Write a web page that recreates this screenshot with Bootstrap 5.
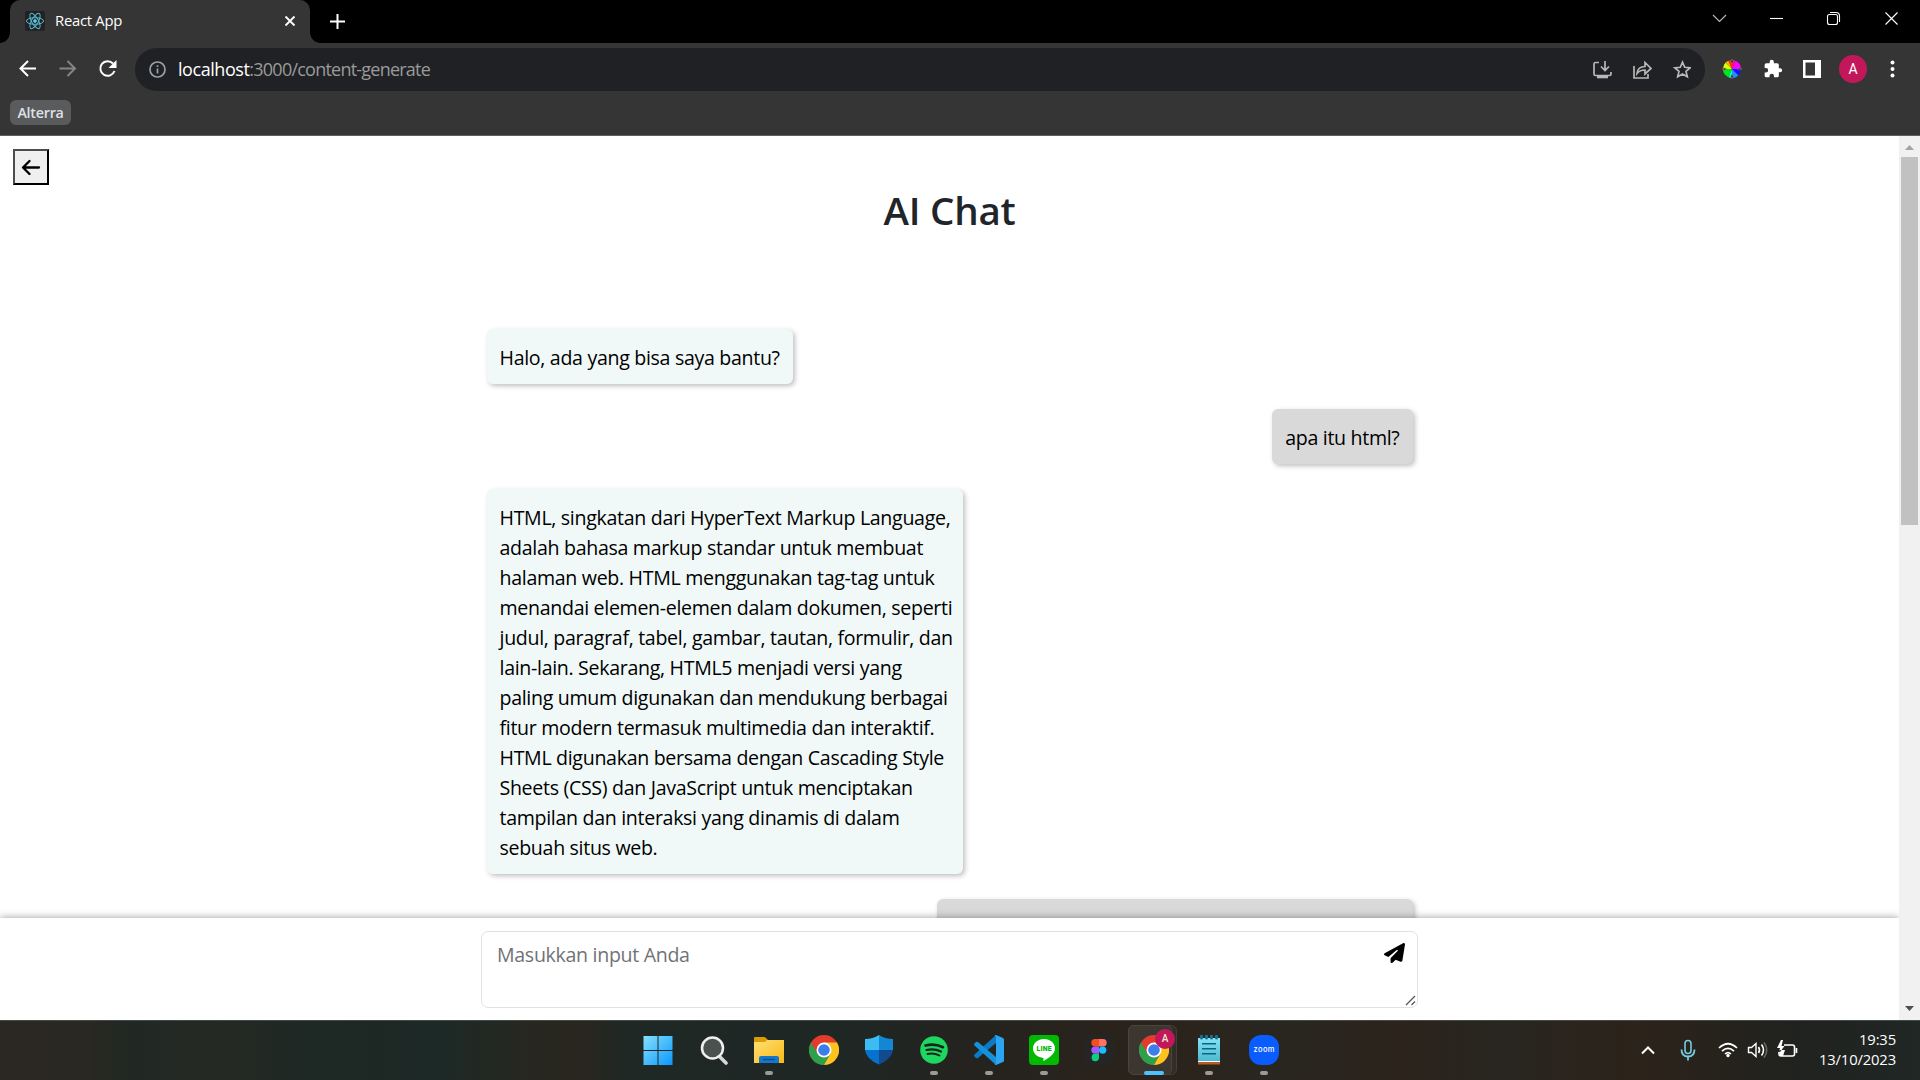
<!DOCTYPE html>
<html lang="id">
<head>
<meta charset="utf-8">
<title>React App</title>
<link href="https://cdn.jsdelivr.net/npm/bootstrap@5.3.0/dist/css/bootstrap.min.css" rel="stylesheet">
<style>
html,body{height:1080px;overflow:hidden}
body{font-family:"Open Sans","Noto Sans",sans-serif;width:1920px;background:#fff}
svg{display:block;flex:none}
.tabstrip{height:43px;background:#000;padding-left:10px}
.apptab{width:300px;height:43px;background:#353535;border-radius:10px 10px 0 0;padding:0 14px 1px 15px;color:#fff;position:relative}
.apptab::before,.apptab::after{content:"";position:absolute;bottom:0;width:10px;height:10px}
.apptab::before{left:-10px;background:radial-gradient(circle at 0 0,#000 9.5px,#353535 10px)}
.apptab::after{right:-10px;background:radial-gradient(circle at 100% 0,#000 9.5px,#353535 10px)}
.tabtitle{font-size:14.8px;letter-spacing:-.25px;margin:-2px 0 0 10px}
.favicon{background:#222;border-radius:2px}
.toolbar{height:53px;background:#353535;padding:0 16px 0 16px}
.omnibox{width:1570px;height:43px;border-radius:22px;background:#202124;margin-left:15px;padding:0 14px 0 14px}
.addr{font-size:18px;letter-spacing:-.77px;color:#9a9a9a;margin:-1px 0 0 12px;line-height:24px}
.addr b{font-weight:400;color:#fff;letter-spacing:-.45px}
.bookmarks{height:40px;background:#353535;border-bottom:1px solid #5f5f5f;padding:4px 10px}
.chip{background:#5a5b5d;border-radius:6px;width:61px;height:25px;font-size:14.3px;font-weight:600;letter-spacing:-.25px;color:#dfe1e5}
.avatar{width:28px;height:28px;background:#c2185b;color:#fff;font-size:14px;font-family:Roboto,sans-serif}
.page{height:884px}
.view{width:1899px;overflow:hidden}
.feed{height:782px;overflow:hidden}
.back{width:36px;height:36px;margin:13px 0 0 13px;border:2px solid;border-color:#4d4d4d #000 #000 #4d4d4d;background:#efefef;padding:0}
.head{font-size:38.5px;font-weight:600;line-height:48px;letter-spacing:-.2px;margin:1px 0 0;color:#212529}
.chat{width:926px;margin:95px auto 0;gap:25px}
.bubble{border-radius:6px;padding:14px 13px 11px;font-size:19.6px;letter-spacing:-.32px;line-height:30px;color:#000;box-shadow:2px 2px 5px rgba(0,0,0,.25);white-space:nowrap}
.bot{background:#f0f9f8}
.me{background:#d9d9d9}
.wide{width:476px}
.composer{height:102px;background:#fff;box-shadow:0 0 8px rgba(0,0,0,.4);position:relative;padding-top:13px}
.field{width:937px;height:77px;border:1px solid #dee2e6;border-radius:7px;padding:8px 12px 0 15px;position:relative}
.ph{font-size:19.6px;letter-spacing:-.32px;line-height:30px;color:#707376}
.grip{position:absolute;right:1px;bottom:1px}
.sb{width:21px;background:#f1f1f1;padding:0 2px}
.thumb{width:17px;height:368px;background:#c1c1c1}
.taskbar{height:60px;border-top:1px solid #454a48;background:linear-gradient(90deg,#2b2722 0,#292822 90px,#212824 130px,#252923 220px,#1e2825 310px,#1d2926 440px,#28271f 545px,#28261f 585px,#1e2825 630px,#1f2725 850px,#24231f 960px,#2b231b 1150px,#292620 1280px,#2b231c 1400px,#282620 1500px,#2c231a 1640px,#20221f 1800px,#202725 1920px);color:#fff}
.apps{margin-left:631px}
.app{width:55px;height:59px;position:relative;padding-top:14px}
.app::after{content:"";position:absolute;left:50%;bottom:5px;width:0;height:4px;border-radius:2px;background:#9a9a98;transform:translateX(-50%)}
.run::after{width:8px}
.act::after{width:20px;background:#4cc2ff}
.actbg{position:absolute;left:2px;top:4px;width:49px;height:50px}
.pin{position:absolute;left:28px;top:8px;width:20px;height:20px;background:#c2185b;color:#eec;font:500 10px/20px Roboto,sans-serif;text-align:center}
.clock{font-size:14.8px;line-height:20px;letter-spacing:-.15px;padding-bottom:4px}
</style>
<script src="https://cdn.jsdelivr.net/npm/bootstrap@5.3.0/dist/js/bootstrap.bundle.min.js"></script>
</head>
<body class="d-flex flex-column">
<header>
 <div class="tabstrip d-flex">
  <div class="apptab d-flex align-items-center">
   <svg class="favicon" width="20" height="20" viewBox="0 0 20 20" fill="none" stroke="#53b9d3" stroke-width="1"><ellipse cx="10" cy="10" rx="8.6" ry="3.3"/><ellipse cx="10" cy="10" rx="8.6" ry="3.3" transform="rotate(60 10 10)"/><ellipse cx="10" cy="10" rx="8.6" ry="3.3" transform="rotate(120 10 10)"/><circle cx="10" cy="10" r="1.4" fill="#61dafb"/></svg>
   <span class="tabtitle">React App</span>
   <svg class="ms-auto" width="12" height="12" viewBox="0 0 12 12" stroke="#fff" stroke-width="1.8"><path d="M1.5 1.5l9 9M10.500 1.500l-9 9"/></svg>
  </div>
  <svg style="margin:13px 0 0 19px" width="17" height="17" viewBox="0 0 17 17" stroke="#fff" stroke-width="2"><path d="M8.500 1v15M1 8.500h15"/></svg>
  <svg class="ms-auto" width="230" height="38" viewBox="0 0 230 38" fill="none" stroke="#fff" stroke-width="1.1"><path d="M23 15l6.500 6.500L36 15" stroke="#bbb"/><path d="M80 18.500h13"/><rect x="137.500" y="14.500" width="10" height="10" rx="2"/><path d="M140 12.500h6a3.500 3.500 0 0 1 3.500 3.500v6"/><path d="M195.500 12.500l12 12M207.500 12.500l-12 12"/></svg>
 </div>
 <div class="toolbar d-flex align-items-center">
  <svg style="margin-top:-2px" width="104" height="24" viewBox="0 0 104 24" fill="none" stroke="#fff" stroke-width="2"><path d="M20 11.500H5M12 4l-7.500 7.500L12 19"/><path d="M43.500 11.500h15M51.500 4l7.500 7.500-7.500 7.500" stroke="#858585"/><path d="M98.500 14a7.300 7.300 0 1 1-1.500-7.500"/><path d="M100.500 3v8h-8z" fill="#fff" stroke="none"/></svg>
  <div class="omnibox d-flex align-items-center">
   <svg width="17" height="17" viewBox="0 0 17 17" fill="none" stroke="#9aa0a6" stroke-width="1.700"><circle cx="8.500" cy="8.500" r="7.500"/><path d="M8.500 7.500v5M8.500 4.300v1.800"/></svg>
   <span class="addr"><b>localhost</b>:3000/content-generate</span>
   <svg class="ms-auto" width="100" height="24" viewBox="0 0 100 24" fill="none" stroke="#b8b8b8" stroke-width="1.700"><path d="M8 4.500H4.500a1.500 1.500 0 0 0-1.500 1.500v10a1.500 1.500 0 0 0 1.500 1.500h14a1.500 1.500 0 0 0 1.500-1.500v-2M14 3v9M10 8.500l4 4 4-4"/><path d="M6 18h11v2.300H6z" fill="#b8b8b8" stroke="none"/><path d="M43 8v12h14v-4M46 15.500c.5-5 3.500-7 8-7V4.500l6 6-6 5.500v-4c-3.500 0-6 1-8 3.500z"/><path d="M91.500 4.200l2.200 5.100 5.500.5-4.200 3.600 1.300 5.400-4.800-2.900-4.800 2.900 1.300-5.400-4.200-3.600 5.500-.5z"/></svg>
  </div>
  <svg style="margin:-2px 0 0 17px" width="20" height="20" viewBox="0 0 20 20"><path d="M10 10V1a9 9 0 0 1 3.500.7z" fill="#ff1060"/><path d="M10 10l3.500-8.300A9 9 0 0 1 19 10z" fill="#f0f"/><path d="M10 10h9a9 9 0 0 1-2.600 6.400z" fill="#1010ff"/><path d="M10 10l6.400 6.400A9 9 0 0 1 10 19z" fill="#1e90ff"/><path d="M10 10v9a9 9 0 0 1-3.600-.8z" fill="#0fd"/><path d="M10 10l-3.600 8.200A9 9 0 0 1 1 10z" fill="#00e516"/><path d="M10 10H1a9 9 0 0 1 2.600-6.400z" fill="#df0"/><path d="M10 10L3.600 3.600A9 9 0 0 1 6.500 1.700z" fill="#ffb000"/><path d="M10 10L6.500 1.700A9 9 0 0 1 10 1z" fill="#ff3000"/><path d="M10 0l1.300 2.500L10 5 8.700 2.500zM10 15l1.300 2.500L10 20l-1.300-2.500zM0 10l2.500-1.100L5 10l-2.500 1.100zM15 10l2.500-1.100L20 10l-2.500 1.100z" fill="#333" stroke="#999" stroke-width=".4"/></svg>
  <svg style="margin:-2px 0 0 21px" width="20" height="20" viewBox="0 0 24 24" fill="#fff"><path d="M20.500 11H19V7a2 2 0 0 0-2-2h-4V3.500a2.500 2.500 0 0 0-5 0V5H4a2 2 0 0 0-2 2v3.800h1.500a2.700 2.700 0 0 1 0 5.400H2V20a2 2 0 0 0 2 2h3.800v-1.500a2.700 2.700 0 0 1 5.400 0V22H17a2 2 0 0 0 2-2v-4h1.500a2.500 2.500 0 0 0 0-5z"/></svg>
  <svg style="margin:-1px 0 0 20px" width="18" height="18" viewBox="0 0 18 18"><path d="M0 0h18v18H0z" fill="#fff"/><path d="M2.500 2.500h9.500v13H2.500z" fill="#353535"/></svg>
  <div class="avatar rounded-circle d-flex align-items-center justify-content-center" style="margin:-1px 0 0 18px">A</div>
  <svg class="ms-auto" style="margin-top:-1px" width="24" height="20" viewBox="0 0 24 20" fill="#fff"><circle cx="12.500" cy="3.500" r="2"/><circle cx="12.500" cy="10" r="2"/><circle cx="12.500" cy="16.500" r="2"/></svg>
 </div>
 <div class="bookmarks"><div class="chip d-flex align-items-center justify-content-center">Alterra</div></div>
</header>
<div class="page d-flex">
 <main class="view d-flex flex-column">
  <div class="feed">
   <button class="back d-flex align-items-center justify-content-center" aria-label="Kembali"><svg width="20" height="16" viewBox="0 0 20 16" fill="none" stroke="#000" stroke-width="2.300" stroke-linecap="round" stroke-linejoin="round"><path d="M18 8.500H2.500M8.500 2L2 8.500 8.500 15"/></svg></button>
   <h1 class="head text-center">AI Chat</h1>
   <div class="chat d-flex flex-column">
    <div class="bubble bot align-self-start">Halo, ada yang bisa saya bantu?</div>
    <div class="bubble me align-self-end">apa itu html?</div>
    <div class="bubble bot wide align-self-start">HTML, singkatan dari HyperText Markup Language,<br>adalah bahasa markup standar untuk membuat<br>halaman web. HTML menggunakan tag-tag untuk<br>menandai elemen-elemen dalam dokumen, seperti<br>judul, paragraf, tabel, gambar, tautan, formulir, dan<br>lain-lain. Sekarang, HTML5 menjadi versi yang<br>paling umum digunakan dan mendukung berbagai<br>fitur modern termasuk multimedia dan interaktif.<br>HTML digunakan bersama dengan Cascading Style<br>Sheets (CSS) dan JavaScript untuk menciptakan<br>tampilan dan interaksi yang dinamis di dalam<br>sebuah situs web.</div>
    <div class="bubble me wide align-self-end">&nbsp;</div>
   </div>
  </div>
  <div class="composer">
   <div class="field d-flex justify-content-between align-items-start mx-auto">
    <span class="ph">Masukkan input Anda</span>
    <svg style="margin-top:3px" width="21" height="20" viewBox="0 0 512 512" preserveAspectRatio="none"><path d="M498.100 5.600c10.100 7 15.400 19.100 13.500 31.200l-64 416c-1.500 9.700-7.400 18.200-16 23s-18.900 5.400-28 1.600L284 427.700l-68.500 74.100c-8.900 9.700-22.900 12.900-35.200 8.100S160 493.200 160 480v-83.600c0-4 1.500-7.800 4.200-10.700l167.600-182.900c5.800-6.300 5.600-16-.4-22s-15.700-6.400-22-.7L106 360.800 17.700 316.600C7.100 311.300.3 300.700 0 288.900s5.900-22.800 16.100-28.700l448-256c10.700-6.100 23.900-5.500 34 1.400z"/></svg>
    <svg class="grip" width="11" height="11" viewBox="0 0 11 11" stroke="#555" stroke-width="1.300"><path d="M1 10l9-9M6.500 10L10 6.500"/></svg>
   </div>
  </div>
 </main>
 <aside class="sb d-flex flex-column align-items-center">
  <svg width="17" height="21" viewBox="0 0 17 21"><path d="M4 14l4.500-5 4.500 5z" fill="#a3a3a3"/></svg>
  <div class="thumb"></div>
  <svg class="mt-auto" width="17" height="21" viewBox="0 0 17 21"><path d="M4 7l4.500 5L13 7z" fill="#505050"/></svg>
 </aside>
</div>
<footer class="taskbar d-flex">
 <div class="apps d-flex">
  <div class="app d-flex justify-content-center"><svg style="margin-left:-2px" width="30" height="30" viewBox="0 0 30 30"><defs><linearGradient id="w" x1="0" y1="0" x2="1" y2="1"><stop offset="0" stop-color="#86e0ff"/><stop offset="1" stop-color="#0a98fb"/></linearGradient></defs><path d="M.5 1h14v14H.5zM15.500 1h14v14h-14zM.5 16h14v14H.5zM15.500 16h14v14h-14z" fill="url(#w)"/></svg></div>
  <div class="app d-flex justify-content-center"><svg width="30" height="30" viewBox="0 0 30 30"><path d="M20 21l7 7" stroke="#d4d7db" stroke-width="3.600" stroke-linecap="round"/><circle cx="13.500" cy="13" r="10.500" fill="#4b514f" stroke="#eeeff1" stroke-width="2.500"/></svg></div>
  <div class="app run d-flex justify-content-center"><svg width="30" height="30" viewBox="0 0 30 30"><defs><linearGradient id="f" x1="0" y1="0" x2="1" y2="1"><stop offset="0" stop-color="#ffe075"/><stop offset="1" stop-color="#f9b814"/></linearGradient></defs><path d="M0 3q0-1 1-1h9q1 0 2 1l2 2v7H0z" fill="#dd9b05"/><path d="M0 7h11l2-2h17v23H0z" fill="url(#f)"/><path d="M5 28v-5q0-2 2-2h16q2 0 2 2v5z" fill="#1478c9"/><path d="M9 24.500h12" stroke="#0a4a8c" stroke-width="1.300"/></svg></div>
  <div class="app d-flex justify-content-center"><svg width="30" height="30" viewBox="0 0 48 48"><g id="chrome"><circle cx="24" cy="24" r="24" fill="#e33b2e"/><path d="M3.200 12A24 24 0 0 0 24 48l10.400-18L24 24l-10.400 6z" fill="#2da04c"/><path d="M24 12h20.800A24 24 0 0 1 24 48l10.400-18z" fill="#fcc41c"/><circle cx="24" cy="24" r="12" fill="#fff"/><circle cx="24" cy="24" r="9.300" fill="#3b7ded"/></g></svg></div>
  <div class="app d-flex justify-content-center"><svg width="30" height="30" viewBox="0 0 30 30"><path d="M15 0v15H1V4q8 0 14-4z" fill="#3bbcf2"/><path d="M15 0q6 4 14 4v11H15z" fill="#1487d4"/><path d="M1 15h14v14.500Q2 24 1 15z" fill="#0672cd"/><path d="M15 15h14q-1 9-14 14.500z" fill="#114a8e"/></svg></div>
  <div class="app run d-flex justify-content-center"><svg width="30" height="30" viewBox="0 0 30 30" fill="none" stroke="#17251c" stroke-linecap="round"><circle cx="15" cy="15" r="13.800" fill="#1ed760" stroke="none"/><path d="M6.500 10.500q9-2.500 17.500 1.700" stroke-width="2.700"/><path d="M7.500 15q7.500-2 14.500 1.600" stroke-width="2.200"/><path d="M8.500 19q6-1.500 12 1.500" stroke-width="1.900"/></svg></div>
  <div class="app run d-flex justify-content-center"><svg width="30" height="30" viewBox="0 0 30 30"><path d="M22 0v8L4 23q-1 .7-2 0l-1.500-1.500q-1-1 0-2z" fill="#0a7ac4"/><path d="M22 30v-8L4 7q-1-.7-2 0L.5 8.500q-1 1 0 2z" fill="#1690db"/><path d="M22 0l7 3q1 .5 1 1.500v21q0 1-1 1.500l-7 3q-1 0-1.500-1 1.500.5 1.500-1V2q0-1.500-1.500-1 .5-1 1.500-1z" fill="#2aa5f1"/></svg></div>
  <div class="app run d-flex justify-content-center"><svg width="30" height="30" viewBox="0 0 30 30"><rect width="30" height="30" rx="4" fill="#00b900"/><path d="M15 4C8.500 4 4 8.300 4 13.500c0 4.800 4 8.500 9.500 9.300 1.500.3 1 1.200.8 3.200 4-2 11.700-6.500 11.700-12.500C26 8.300 21.500 4 15 4z" fill="#fff"/><text x="15" y="16.300" font-family="Roboto" font-size="6.800" font-weight="900" text-anchor="middle" textLength="15" fill="#00b900">LINE</text></svg></div>
  <div class="app d-flex justify-content-center"><svg width="30" height="30" viewBox="0 0 30 30"><rect width="30" height="30" rx="2" fill="#252525"/><path d="M15 4h-4a3.700 3.700 0 0 0 0 7.400h4z" fill="#f24e1e"/><path d="M15 4h4a3.700 3.700 0 0 1 0 7.400h-4z" fill="#ff7262"/><path d="M15 11.400h-4a3.700 3.700 0 0 0 0 7.400h4z" fill="#a259ff"/><circle cx="18.700" cy="15.100" r="3.700" fill="#1abcfe"/><path d="M15 18.800h-4a3.700 3.700 0 1 0 4 3.700z" fill="#0acf83"/></svg></div>
  <div class="app act d-flex justify-content-center"><svg class="actbg" viewBox="0 0 49 50"><rect x=".5" y=".5" width="48" height="49" rx="5" fill="#332d27" stroke="#443e38"/><rect x=".5" y=".5" width="43" height="49" rx="5" fill="#3b3630" stroke="#49443e"/></svg><svg class="position-relative" width="30" height="30" viewBox="0 0 48 48"><use href="#chrome"/></svg><span class="pin rounded-circle" style="margin-left:1px">A</span></div>
  <div class="app run d-flex justify-content-center"><svg width="30" height="30" viewBox="0 0 30 30"><defs><linearGradient id="n" x1="0" y1="0" x2="0" y2="1"><stop offset="0" stop-color="#84e3f5"/><stop offset="1" stop-color="#4db8d2"/></linearGradient></defs><path d="M4 25h22v4.500H4z" fill="#b65d22"/><path d="M4 25h22v2H4z" fill="#fff"/><path d="M4 3h22v23H4z" fill="url(#n)"/><path d="M8 8.700h14M8 13.700h14M8 18.700h14" stroke="#0b6481" stroke-width="1.600"/><path d="M7.500 1v2M12.500 1v2M17.500 1v2M22.500 1v2" stroke="#14708d" stroke-width="3" stroke-linecap="round"/></svg></div>
  <div class="app run d-flex justify-content-center"><svg width="30" height="30" viewBox="0 0 30 30"><rect width="30" height="30" rx="12" fill="#0b5cff"/><text x="15" y="17.300" font-family="Inter" font-size="7.500" font-weight="500" text-anchor="middle" textLength="21" fill="#fff">zoom</text></svg></div>
 </div>
 <div class="d-flex align-items-center ms-auto" style="padding-right:24px">
  <svg style="margin:-2px 1px 0 0" width="170" height="30" viewBox="0 0 170 30" fill="none" stroke="#fff" stroke-width="1.600"><path d="M9 18.500l6-6 6 6" stroke-width="2"/><g stroke="#74cde0"><rect x="52" y="5.500" width="6" height="13" rx="3"/><path d="M48.500 14.500q0 7 6.500 7t6.500-7M55 21.500v4" stroke-width="1.800"/></g><path d="M86 13q9-8.500 18 0M89 16.200q6-5.500 12 0M92 19q3-2.800 6 0" stroke-width="1.700"/><circle cx="95" cy="20.500" r="1.700" fill="#fff" stroke="none"/><path d="M115.500 12.500h3l4.500-4v13l-4.500-4h-3z" stroke-width="1.400"/><path d="M125.500 12q2 3 0 6M128.500 9.500q4 5.500 0 11"/><path d="M131 7.500q5.500 7.500 0 15" stroke="#666"/><path d="M151 10h8.500a2 2 0 0 1 2 2v7a2 2 0 0 1-2 2H148a2 2 0 0 1-2-2v-2M163.500 13v5"/><path d="M148 5l-4 8h3l-1.500 6 6-8h-3l1.500-6zM146 15h6l-2 6h-3z" fill="#fff" stroke="none"/></svg>
  <div class="clock text-end" style="width:92px">19:35<br>13/10/2023</div>
 </div>
</footer>
</body>
</html>
